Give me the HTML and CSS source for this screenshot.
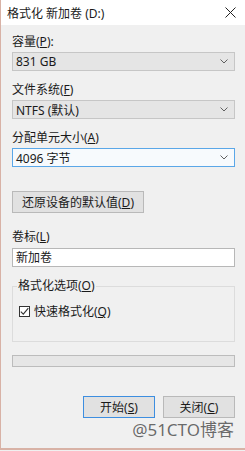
FILE: index.html
```html
<!DOCTYPE html>
<html lang="zh-CN">
<head>
    <meta charset="UTF-8">
    <title>格式化 新加卷 (D:)</title>
    <link rel="stylesheet" href="styles.css">
</head>
<body>
    <div class="window">
        <!-- Title bar -->
        <div class="titlebar">
            <span class="title">格式化 新加卷 (D:)</span>
            <svg class="close" width="11" height="11" viewBox="0 0 11 11">
                <path d="M0.5 0.5 L10.5 10.5 M10.5 0.5 L0.5 10.5" stroke="#222" stroke-width="1" fill="none"/>
            </svg>
        </div>

        <div class="content">
            <div class="label first">容量(<u>P</u>):</div>
            <div class="combo">
                <span>831 GB</span>
                <svg class="arrow" width="8" height="5" viewBox="0 0 8 5"><path d="M0.5 0.5 L4 4 L7.5 0.5" stroke="#606060" fill="none"/></svg>
            </div>

            <div class="label">文件系统(<u>F</u>)</div>
            <div class="combo">
                <span>NTFS (默认)</span>
                <svg class="arrow" width="8" height="5" viewBox="0 0 8 5"><path d="M0.5 0.5 L4 4 L7.5 0.5" stroke="#606060" fill="none"/></svg>
            </div>

            <div class="label">分配单元大小(<u>A</u>)</div>
            <div class="combo focused">
                <span>4096 字节</span>
                <svg class="arrow" width="8" height="5" viewBox="0 0 8 5"><path d="M0.5 0.5 L4 4 L7.5 0.5" stroke="#606060" fill="none"/></svg>
            </div>

            <button class="btn restore">还原设备的默认值(<u>D</u>)</button>

            <div class="label volume">卷标(<u>L</u>)</div>
            <div class="textbox">新加卷</div>

            <fieldset class="options">
                <legend>格式化选项(<u>O</u>)</legend>
                <div class="check-row">
                    <span class="checkbox">
                        <svg width="9" height="9" viewBox="0 0 9 9"><path d="M0.8 4.6 L3.3 7.2 L8.3 1.2" stroke="#333" stroke-width="1.1" fill="none"/></svg>
                    </span>
                    <span>快速格式化(<u>Q</u>)</span>
                </div>
            </fieldset>

            <div class="progress"></div>

            <div class="actions">
                <button class="btn default">开始(<u>S</u>)</button>
                <button class="btn">关闭(<u>C</u>)</button>
            </div>

            <div class="watermark">@51CTO博客</div>
        </div>
    </div>
</body>
</html>
```

FILE: styles.css
```css
body {
    margin: 0;
    background-color: #f0f0f0;
    font-family: "Noto Sans", "Noto Sans CJK SC", sans-serif;
    font-size: 12px;
    color: #1a1a1a;
}
u {
    text-decoration: underline;
    text-underline-offset: 1px;
}
.window {
    width: 245px;
    height: 450px;
    box-sizing: border-box;
    border-left: 1px solid #d8b2a6;
    border-bottom: 2px solid #d8b2a6;
    background-color: #f0f0f0;
    overflow: hidden;
}
.titlebar {
    height: 25px;
    background-color: #fff;
    display: flex;
    align-items: center;
    justify-content: space-between;
    padding: 0 9px 0 6px;
}
.title {
    font-size: 12px;
}
.close {
    display: block;
}
.content {
    padding: 0 10px 0 11px;
}
.label {
    height: 16px;
    line-height: 16px;
    margin-top: 11px;
    margin-bottom: 2px;
}
.label.first {
    margin-top: 9px;
}
.label.volume {
    margin-top: 16px;
    margin-bottom: 3px;
}
.combo {
    height: 19px;
    box-sizing: border-box;
    border: 1px solid #c6c6c6;
    background-color: #e5e5e5;
    display: flex;
    align-items: center;
    justify-content: space-between;
    padding: 0 6px 0 3px;
}
.combo.focused {
    border-color: #5aa7e8;
    background-color: #f7fafd;
}
.arrow {
    display: block;
}
.btn {
    font-family: inherit;
    font-size: 12px;
    color: #1a1a1a;
    background-color: #e1e1e1;
    border: 1px solid #b9b9b9;
    height: 22px;
    padding: 0;
    box-sizing: border-box;
    cursor: pointer;
}
.btn.restore {
    display: block;
    width: 132px;
    margin-top: 24px;
}
.btn.default {
    border-color: #3d8ee0;
}
.textbox {
    height: 19px;
    box-sizing: border-box;
    border: 1px solid #b7b7b7;
    background-color: #fff;
    line-height: 17px;
    padding-left: 3px;
}
.options {
    margin: 11px 0 0 0;
    padding: 0 6px 0 6px;
    height: 64px;
    box-sizing: border-box;
    border: 1px solid #dcdcdc;
}
.options legend {
    padding: 0 1px;
    margin-left: -2px;
    line-height: 16px;
}
.check-row {
    display: flex;
    align-items: center;
    gap: 4px;
    margin-top: 8px;
}
.checkbox {
    width: 11px;
    height: 11px;
    box-sizing: border-box;
    border: 1px solid #333;
    background-color: #fff;
    display: flex;
    align-items: center;
    justify-content: center;
}
.checkbox svg {
    display: block;
}
.progress {
    height: 12px;
    box-sizing: border-box;
    margin-top: 13px;
    border: 1px solid #bcbcbc;
    background-color: #e6e6e6;
}
.actions {
    display: flex;
    justify-content: flex-end;
    gap: 8px;
    margin-top: 29px;
}
.actions .btn {
    width: 72px;
}
.watermark {
    text-align: right;
    font-size: 17px;
    line-height: 20px;
    color: #6a6a6a;
    margin-top: 2px;
    margin-right: 1px;
    text-shadow: 0 0 1px #fff;
}
```
